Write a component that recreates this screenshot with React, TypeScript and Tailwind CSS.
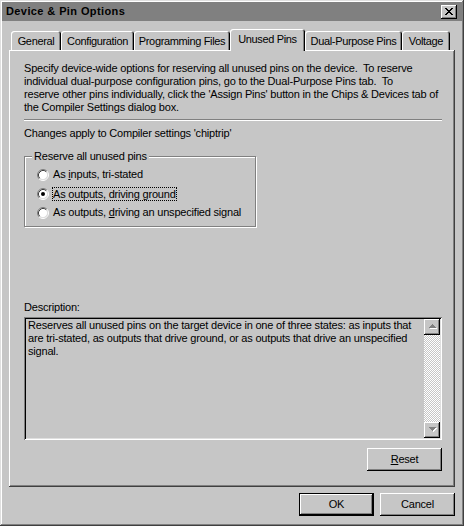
import React from "react";

const raised =
  "shadow-[inset_-1px_-1px_0_#000,inset_1px_1px_0_#fff,inset_-2px_-2px_0_#808080]";

function Radio({ checked }: { checked?: boolean }) {
  return (
    <svg width="12" height="12" viewBox="0 0 12 12" className="shrink-0">
      <circle cx="6" cy="6" r="4.5" fill="#fff" />
      <path d="M2.11 9.89 A5.5 5.5 0 0 1 9.89 2.11" stroke="#808080" fill="none" />
      <path d="M9.89 2.11 A5.5 5.5 0 0 1 2.11 9.89" stroke="#fff" fill="none" />
      <path d="M2.82 9.18 A4.5 4.5 0 0 1 9.18 2.82" stroke="#404040" fill="none" />
      <path d="M9.18 2.82 A4.5 4.5 0 0 1 2.82 9.18" stroke="#dfdfdf" fill="none" />
      {checked && <circle cx="6" cy="6" r="2" fill="#000" />}
    </svg>
  );
}

function Arrow({ down }: { down?: boolean }) {
  return (
    <div className={`w-[16px] h-[16px] bg-[#c6c6c6] flex items-center justify-center ${raised}`}>
      <svg width="9" height="6" viewBox="0 0 9 6" shapeRendering="crispEdges">
        {down ? (
          <>
            <path d="M2 1h7l-3.5 4z" fill="#fff" />
            <path d="M1 0h7l-3.5 4z" fill="#808080" />
          </>
        ) : (
          <>
            <path d="M5.5 1l3.5 4h-7z" fill="#fff" />
            <path d="M4.5 0l3.5 4h-7z" fill="#808080" />
          </>
        )}
      </svg>
    </div>
  );
}

const tabs = [
  { label: "General", w: "w-[50px]" },
  { label: "Configuration", w: "w-[73px]" },
  { label: "Programming Files", w: "w-[96px]" },
  { label: "Unused Pins", w: "w-[75px]", active: true },
  { label: "Dual-Purpose Pins", w: "w-[97px]" },
  { label: "Voltage", w: "w-[48px]" },
];

export default function App() {
  return (
    <div className="w-[464px] h-[526px] bg-[#c6c6c6] p-[2px] text-black text-[11px] leading-[13px] tracking-[-0.2px] font-['Liberation_Sans',Arial,sans-serif] shadow-[inset_-1px_-1px_0_#404040,inset_1px_1px_0_#dfdfdf,inset_-2px_-2px_0_#808080,inset_2px_2px_0_#fff]">
      {/* title bar */}
      <div className="h-[19px] bg-[#808080] flex items-center pl-[4px] pr-[5px]">
        <span className="font-bold text-[11px] tracking-[0.4px] flex-1">Device &amp; Pin Options</span>
        <div className={`w-[16px] h-[14px] bg-[#c6c6c6] flex items-center justify-center ${raised}`}>
          <svg width="8" height="7" viewBox="0 0 8 7" shapeRendering="crispEdges">
            <path d="M0 0h2l2 2.5L6 0h2L5 3.5 8 7H6L4 4.5 2 7H0l3-3.5z" fill="#000" />
          </svg>
        </div>
      </div>

      <div className="ml-[7px] w-[446px]">
        {/* tabs */}
        <div className="mt-[8px] flex items-end pl-[2px] relative z-10 -mb-px tracking-[-0.35px]">
          {tabs.map((t) => (
            <div
              key={t.label}
              className={`${t.w} bg-[#c6c6c6] rounded-t-[3px] flex justify-center shadow-[inset_1px_1px_0_#fff,inset_-1px_0_0_#000,inset_-2px_0_0_#808080] ${
                t.active ? "h-[22px] pt-[4px]" : "h-[19px] pt-[4px] mb-px"
              }`}
            >
              <span className="whitespace-nowrap">{t.label}</span>
            </div>
          ))}
        </div>

        {/* panel */}
        <div className="h-[437px] pt-[12px] pl-[15px] pr-[13px] shadow-[inset_-1px_-1px_0_#404040,inset_1px_1px_0_#fff,inset_-2px_-2px_0_#808080]">
          <p className="whitespace-pre">
            {"Specify device-wide options for reserving all unused pins on the device.  To reserve\nindividual dual-purpose configuration pins, go to the Dual-Purpose Pins tab.  To\nreserve other pins individually, click the 'Assign Pins' button in the Chips & Devices tab of\nthe Compiler Settings dialog box."}
          </p>
          <div className="mt-[5px] h-[2px] border-t border-t-[#808080] border-b border-b-white" />
          <p className="mt-[6px]">Changes apply to Compiler settings 'chiptrip'</p>

          {/* group box */}
          <div className="relative mt-[16px] w-[232px] h-[71px] border border-[#808080] shadow-[inset_1px_1px_0_#fff,1px_1px_0_#fff] pt-[8px] pl-[12px]">
            <span className="absolute left-[7px] -top-[7px] bg-[#c6c6c6] px-[2px]">Reserve all unused pins</span>
            <div className="h-[19px] flex items-center">
              <Radio />
              <span className="ml-[3px] border border-dotted border-transparent">
                As <u>i</u>nputs, tri-stated
              </span>
            </div>
            <div className="h-[19px] flex items-center">
              <Radio checked />
              <span className="ml-[3px] border border-dotted border-black leading-[12px]">
                As outputs, driving <u>g</u>round
              </span>
            </div>
            <div className="h-[19px] flex items-center">
              <Radio />
              <span className="ml-[3px] border border-dotted border-transparent">
                As outputs, <u>d</u>riving an unspecified signal
              </span>
            </div>
          </div>

          <p className="mt-[74px]">Description:</p>
          <div className="mt-[3px] h-[123px] flex p-[2px] shadow-[inset_1px_1px_0_#808080,inset_-1px_-1px_0_#fff,inset_2px_2px_0_#000,inset_-2px_-2px_0_#dfdfdf]">
            <p className="flex-1 pl-[2px] whitespace-pre">
              {"Reserves all unused pins on the target device in one of three states: as inputs that\nare tri-stated, as outputs that drive ground, or as outputs that drive an unspecified\nsignal."}
            </p>
            <div className="w-[16px] flex flex-col">
              <Arrow />
              <div className="flex-1 bg-[repeating-conic-gradient(#fff_0_25%,#c6c6c6_0_50%)] bg-[length:2px_2px]" />
              <Arrow down />
            </div>
          </div>
          <div className="mt-[8px] flex justify-end">
            <button className={`w-[75px] h-[23px] bg-[#c6c6c6] ${raised}`}>
              <u>R</u>eset
            </button>
          </div>
        </div>

        {/* dialog buttons */}
        <div className="mt-[6px] flex justify-end gap-[6px]">
          <button className="w-[75px] h-[23px] bg-[#c6c6c6] border border-black shadow-[inset_-1px_-1px_0_#000,inset_1px_1px_0_#fff,inset_-2px_-2px_0_#808080]">
            OK
          </button>
          <button className={`w-[75px] h-[23px] bg-[#c6c6c6] ${raised}`}>Cancel</button>
        </div>
      </div>
    </div>
  );
}
